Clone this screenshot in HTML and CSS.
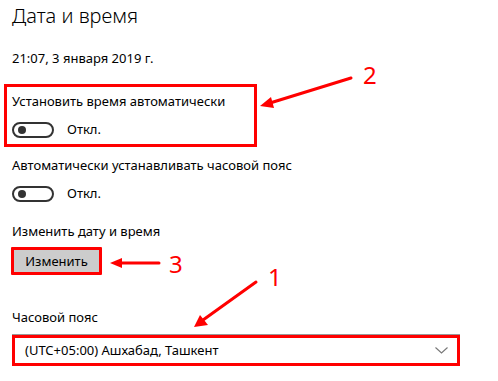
FILE: index.html
```html
<!DOCTYPE html>
<html lang="ru">
<head>
<meta charset="utf-8">
<title>Дата и время</title>
<link rel="stylesheet" href="styles.css">
</head>
<body>
<div class="page">
  <h1 class="title">Дата и время</h1>
  <div class="date">21:07, 3 января 2019 г.</div>

  <div class="mark box-auto">
    <div class="label">Установить время автоматически</div>
    <div class="toggle-row">
      <span class="toggle"><span class="knob"></span></span>
      <span class="state">Откл.</span>
    </div>
  </div>

  <div class="group g-zone">
    <div class="label">Автоматически устанавливать часовой пояс</div>
    <div class="toggle-row">
      <span class="toggle"><span class="knob"></span></span>
      <span class="state">Откл.</span>
    </div>
  </div>

  <div class="group g-change">
    <div class="label">Изменить дату и время</div>
    <button class="btn">Изменить</button>
  </div>

  <div class="group g-tz">
    <div class="label">Часовой пояс</div>
    <div class="select">
      <span class="select-text">(UTC+05:00) Ашхабад, Ташкент</span>
      <svg class="chev" width="13" height="7" viewBox="0 0 13 7"><path d="M0.5 0.5 L6.5 6 L12.5 0.5" fill="none" stroke="#777" stroke-width="1.1"/></svg>
    </div>
  </div>

  <svg class="arrows" width="498" height="381" viewBox="0 0 498 381">
    <g stroke="#f00" stroke-width="3" stroke-linecap="round" fill="#f00">
      <line x1="351" y1="78" x2="270" y2="103"/>
      <polygon points="260,106 271,97 274,108" stroke="none"/>
      <line x1="159" y1="263" x2="121" y2="263"/>
      <polygon points="110,263 122,258 122,268" stroke="none"/>
      <line x1="256" y1="282" x2="203" y2="320"/>
      <polygon points="194,327 200,315 208,325" stroke="none"/>
    </g>
  </svg>
  <span class="num n2">2</span>
  <span class="num n3">3</span>
  <span class="num n1">1</span>
</div>
</body>
</html>
```

FILE: styles.css
```css
html, body {
  margin: 0;
  padding: 0;
  background: #fff;
}
body {
  font-family: "Noto Sans", "Open Sans", sans-serif;
  color: #000;
  width: 498px;
  height: 381px;
  overflow: hidden;
}
.page {
  position: relative;
  width: 498px;
  height: 381px;
  padding-left: 12px;
  box-sizing: border-box;
}
.title {
  margin: 0;
  padding-top: 3px;
  font-size: 20px;
  line-height: 26px;
  font-weight: 300;
}
.date {
  margin-top: 21px;
  font-size: 13px;
  line-height: 17px;
}
.label,
.state,
.select-text {
  font-size: 13px;
  line-height: 17px;
}
.mark {
  border: 3px solid #f00;
}
.box-auto {
  margin-top: 17px;
  margin-left: -8px;
  width: 242px;
  height: 51px;
  padding: 6px 0 0 5px;
  box-sizing: content-box;
}
.toggle-row {
  display: flex;
  align-items: center;
  gap: 13px;
  margin-top: 11px;
}
.toggle {
  display: flex;
  align-items: center;
  width: 42px;
  height: 16px;
  border: 2px solid #333;
  border-radius: 10px;
  box-sizing: border-box;
  padding-left: 4px;
}
.knob {
  width: 8px;
  height: 8px;
  border-radius: 50%;
  background: #333;
}
.g-zone {
  margin-top: 10px;
}
.g-change {
  margin-top: 21px;
}
.g-tz {
  margin-top: 34px;
}
.btn {
  display: block;
  margin-top: 7px;
  margin-left: -1px;
  width: 91px;
  height: 28px;
  background: #ccc;
  border: 3px solid #f00;
  border-radius: 1px;
  font-family: inherit;
  font-size: 13px;
  color: #000;
  padding: 0;
}
.select {
  margin-top: 9px;
  width: 448px;
  height: 31px;
  border: 3px solid #f00;
  box-shadow: 0 -1px 0 #999;
  box-sizing: border-box;
  display: flex;
  align-items: center;
  justify-content: space-between;
  padding: 0 9px 0 10px;
}
.chev {
  display: block;
}
.arrows {
  position: absolute;
  left: 0;
  top: 0;
  pointer-events: none;
}
.num {
  position: absolute;
  color: #f00;
  font-family: "Noto Sans", sans-serif;
  font-size: 24px;
  line-height: 24px;
}
.n2 { left: 363px; top: 63px; }
.n3 { left: 169px; top: 252px; }
.n1 { left: 268px; top: 265px; }
```
